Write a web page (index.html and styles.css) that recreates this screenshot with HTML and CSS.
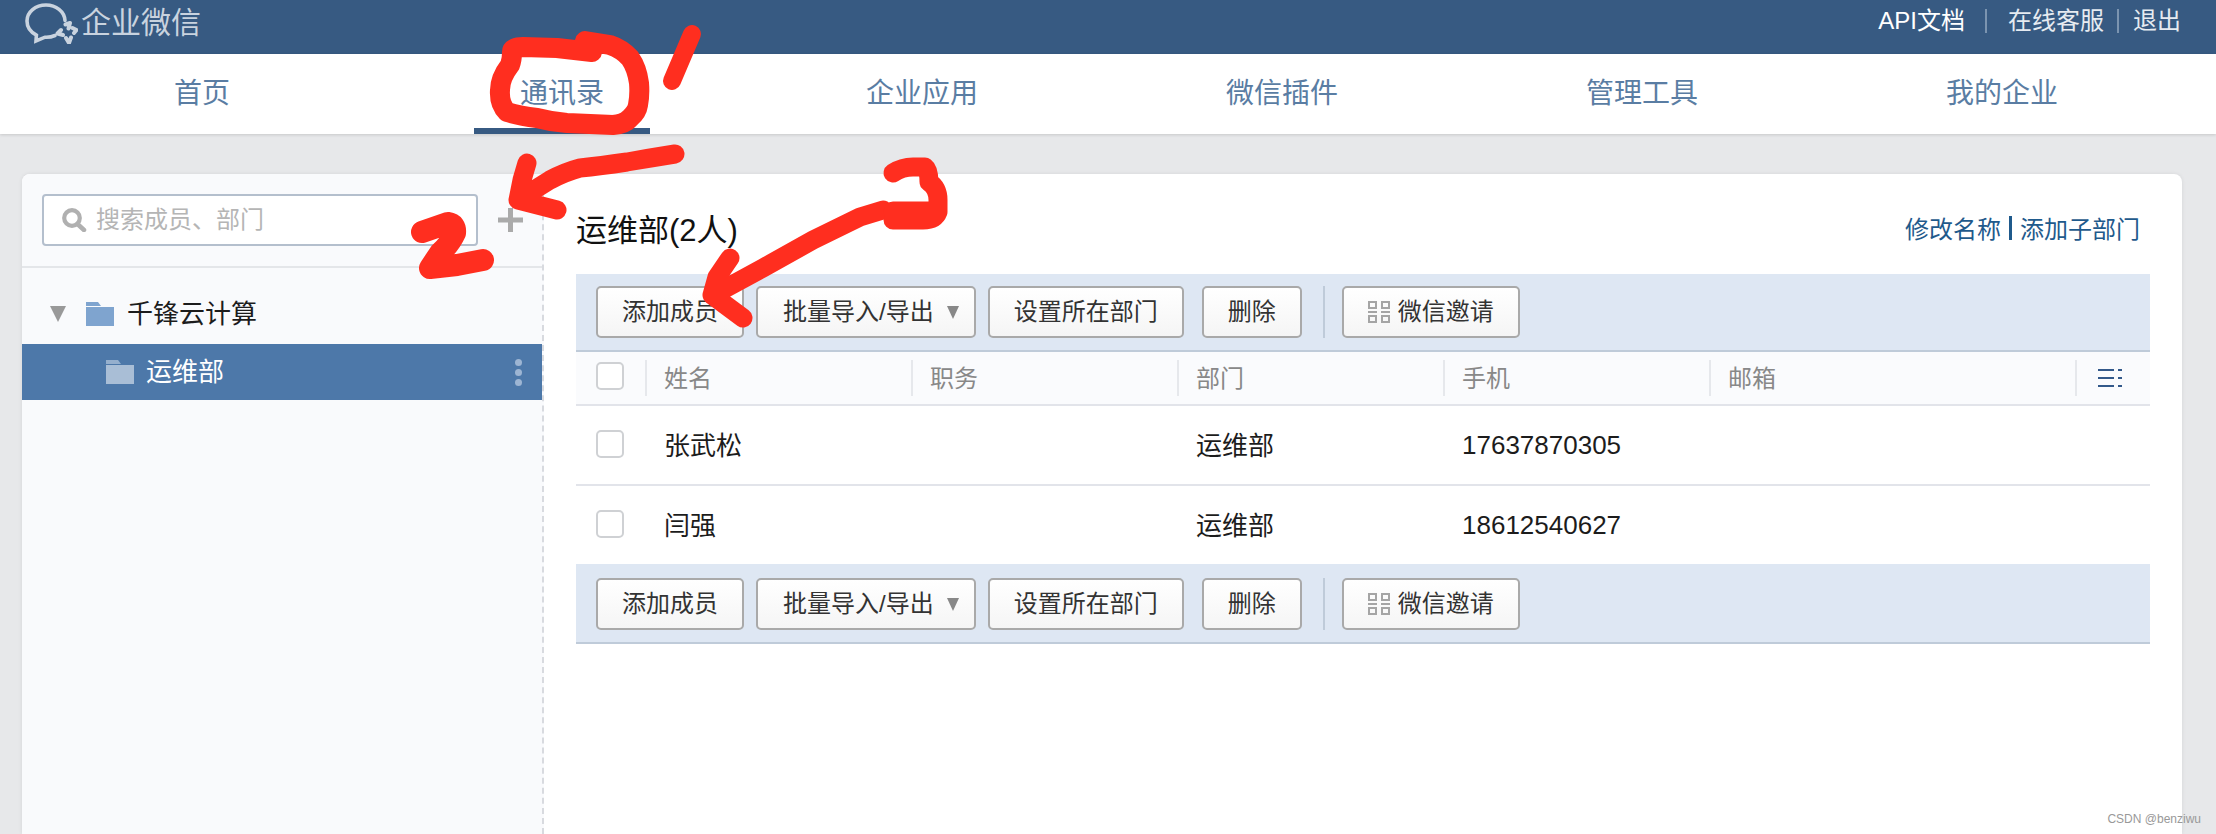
FILE: index.html
```html
<!DOCTYPE html>
<html lang="zh-CN">
<head>
<meta charset="utf-8">
<title>企业微信</title>
<link rel="stylesheet" href="styles.css">
</head>
<body>
<div class="page">
  <header class="topbar">
    <div class="brand">
      <svg class="brand-logo" viewBox="0 0 54 42" width="54" height="42" fill="none">
        <path d="M31 33.5C28 34.8 24.5 35.4 21 35.2L12 39L12.4 33.2C6.5 30 3 25 3 19C3 10 11.500 3 22 3C32 3 40.500 9.500 41 18.500" stroke="#c9d3df" stroke-width="3.600" stroke-linecap="round"/>
        <path d="M41.500 22.500L46 21L44.500 26.500M37 28L33.500 31.500L39 33M42 36L45 41L47 35.500M50 31L52.500 28L48.500 26" stroke="#c9d3df" stroke-width="4" stroke-linejoin="round" stroke-linecap="round"/>
      </svg>
      <span class="brand-name">企业微信</span>
    </div>
    <nav class="toplinks">
      <a class="toplink toplink-api">API文档</a>
      <i class="topsep topsep-wide"></i>
      <a class="toplink">在线客服</a>
      <i class="topsep"></i>
      <a class="toplink">退出</a>
    </nav>
  </header>

  <nav class="mainnav">
    <a class="navitem">首页</a>
    <a class="navitem navitem-active">通讯录</a>
    <a class="navitem">企业应用</a>
    <a class="navitem">微信插件</a>
    <a class="navitem">管理工具</a>
    <a class="navitem">我的企业</a>
  </nav>

  <div class="content">
    <section class="card">
      <aside class="sidebar">
        <div class="side-head">
          <div class="search">
            <svg class="search-icon" viewBox="0 0 26 24" width="26" height="24" fill="none">
              <circle cx="11" cy="10" r="7.800" stroke="#b0b0b0" stroke-width="4.200"/>
              <path d="M16.500 16L23 22" stroke="#b0b0b0" stroke-width="4.500" stroke-linecap="round"/>
            </svg>
            <span class="search-text">搜索成员、部门</span>
          </div>
          <svg class="plus" viewBox="0 0 25 24" width="25" height="24">
            <path d="M10 0h5v9.500h10v5H15V24h-5V14.500H0v-5h10z" fill="#aaaaaa"/>
          </svg>
        </div>
        <ul class="tree">
          <li class="tree-row tree-root">
            <i class="caret"></i>
            <svg class="folder" viewBox="0 0 28 24" width="28" height="24">
              <path d="M0 0h12l3 4H0z" fill="#7fa4cf"/>
              <path d="M0 5h28v19H0z" fill="#7fa4cf"/>
            </svg>
            <span class="tree-label">千锋云计算</span>
          </li>
          <li class="tree-row tree-selected">
            <svg class="folder" viewBox="0 0 28 24" width="28" height="24">
              <path d="M0 0h12l3 4H0z" fill="#95afcd"/>
              <path d="M0 5h28v19H0z" fill="#a9bed6"/>
            </svg>
            <span class="tree-label">运维部</span>
            <span class="dots"><i></i><i></i><i></i></span>
          </li>
        </ul>
      </aside>

      <main class="main">
        <div class="title-row">
          <h1 class="title">运维部(2人)</h1>
          <div class="title-links"><a>修改名称</a><i class="bar"></i><a>添加子部门</a></div>
        </div>

        <div class="toolbar">
          <button class="btn">添加成员</button>
          <button class="btn btn-menu">批量导入/导出<i class="btn-caret"></i></button>
          <button class="btn">设置所在部门</button>
          <button class="btn btn-far">删除</button>
          <i class="tool-sep"></i>
          <button class="btn btn-invite">
            <svg class="qr" viewBox="0 0 22 22" width="22" height="22" fill="none" stroke="#a5a5a5" stroke-width="2">
              <path d="M1 1h7v6H1zM14 1h7v6h-7zM1 15h7v6H1zM14 15h7v6h-7z"/>
              <path d="M0 11h9M13 11h9"/>
            </svg>微信邀请</button>
        </div>

        <div class="grid grid-head">
          <div class="cell-check"><i class="check"></i></div>
          <div class="hcell">姓名</div>
          <div class="hcell">职务</div>
          <div class="hcell">部门</div>
          <div class="hcell">手机</div>
          <div class="hcell">邮箱</div>
          <div class="hcell hcell-icon">
            <svg viewBox="0 0 24 18" width="24" height="18" fill="#33598a">
              <path d="M0 0h16v2H0zM20 0h4v2h-4zM0 8h16v2H0zM20 8h4v2h-4zM0 16h16v2H0zM20 16h4v2h-4z"/>
            </svg>
          </div>
        </div>
        <div class="grid grid-row">
          <div class="cell-check"><i class="check"></i></div>
          <div class="cell">张武松</div>
          <div class="cell"></div>
          <div class="cell">运维部</div>
          <div class="cell cell-num">17637870305</div>
          <div class="cell"></div>
          <div class="cell"></div>
        </div>
        <div class="grid grid-row grid-last">
          <div class="cell-check"><i class="check"></i></div>
          <div class="cell">闫强</div>
          <div class="cell"></div>
          <div class="cell">运维部</div>
          <div class="cell cell-num">18612540627</div>
          <div class="cell"></div>
          <div class="cell"></div>
        </div>

        <div class="toolbar toolbar-bottom">
          <button class="btn">添加成员</button>
          <button class="btn btn-menu">批量导入/导出<i class="btn-caret"></i></button>
          <button class="btn">设置所在部门</button>
          <button class="btn btn-far">删除</button>
          <i class="tool-sep"></i>
          <button class="btn btn-invite">
            <svg class="qr" viewBox="0 0 22 22" width="22" height="22" fill="none" stroke="#a5a5a5" stroke-width="2">
              <path d="M1 1h7v6H1zM14 1h7v6h-7zM1 15h7v6H1zM14 15h7v6h-7z"/>
              <path d="M0 11h9M13 11h9"/>
            </svg>微信邀请</button>
        </div>
      </main>
    </section>
  </div>

  <svg class="marks" viewBox="0 0 2216 834" width="2216" height="834" fill="none">
    <g stroke="#ff2e1f" stroke-linecap="round" stroke-linejoin="round">
      <path stroke-width="20" d="M592 52L557 48L523 47Q512 47 512 52Q512 60 510 65Q500 78 500 90Q499 104 507 112Q520 116 537 118Q552 122 567 123L613 125Q625 124 630 118Q637 112 638 105Q640 95 639 83Q637 68 630 58Q622 49 610 45L585 41"/>
      <path stroke-width="18" d="M692 34L672 81"/>
      <path stroke-width="19" d="M675 154Q650 158 627 162Q600 166 580 168Q565 172 550 180L518 200L557 210M527 163L522 180L518 200"/>
      <path stroke-width="22" d="M422 232L448 223Q456 224 455 233Q450 244 440 253L430 268L457 265L483 260"/>
      <path stroke-width="19" d="M883 210L860 217L813 240L763 268L717 293L712 295L743 318M730 258L717 277L712 295"/>
      <path stroke-width="19" d="M893 173Q902 167 913 167H925Q929 170 929 182Q938 188 938 200V212Q935 220 923 220H893M893 211H938"/>
    </g>
  </svg>
  <div class="watermark">CSDN @benziwu</div>
</div>
</body>
</html>
```
FILE: styles.css
```css
* { box-sizing: border-box; }
html, body { margin: 0; padding: 0; }
body {
  font-family: "Liberation Sans", "Noto Sans CJK SC", sans-serif;
  color: #1c1c1c;
  background: #e7e8ea;
}
i { display: block; font-style: normal; }
ul { list-style: none; margin: 0; padding: 0; }

.page {
  position: relative;
  width: 2216px;
  height: 834px;
  overflow: hidden;
  display: flex;
  flex-direction: column;
}

/* top bar */
.topbar {
  flex: none;
  height: 54px;
  background: #375a82;
  display: flex;
  justify-content: space-between;
  align-items: flex-start;
  padding: 0 35px 0 24px;
}
.brand { display: flex; align-items: center; height: 46px; }
.brand-logo { display: block; }
.brand-name {
  margin-left: 3px;
  font-size: 30px;
  line-height: 46px;
  color: #c9d3df;
}
.toplinks { display: flex; align-items: center; height: 42px; }
.toplink { font-size: 24px; line-height: 42px; color: #e6ebf1; }
.toplink-api { color: #fff; }
.topsep {
  width: 2px;
  height: 24px;
  margin: 0 14px 0 13px;
  background: #7b94b0;
}
.topsep-wide { margin: 0 21px 0 20px; }

/* main nav */
.mainnav {
  position: relative;
  flex: none;
  height: 80px;
  background: #fff;
  box-shadow: 0 1px 3px rgba(0, 0, 0, .14);
  display: grid;
  grid-template-columns: repeat(6, 360px);
  padding-left: 22px;
}
.navitem {
  position: relative;
  text-align: center;
  font-size: 28px;
  line-height: 80px;
  color: #5a7da3;
}
.navitem-active::after {
  content: "";
  position: absolute;
  left: 92px;
  bottom: 0;
  width: 176px;
  height: 6px;
  background: #375a82;
}

/* card */
.content { flex: 1; min-height: 0; padding: 40px 34px 0 22px; }
.card {
  height: 100%;
  display: flex;
  background: #fff;
  border-radius: 8px 8px 0 0;
  box-shadow: 0 0 4px rgba(0, 0, 0, .08);
  overflow: hidden;
}

/* sidebar */
.sidebar {
  flex: none;
  width: 522px;
  background: #f9fafc;
  border-right: 2px dashed #d8dadf;
}
.side-head {
  height: 94px;
  padding: 20px 0 0 20px;
  display: flex;
  align-items: flex-start;
  border-bottom: 2px solid #e4e6e9;
}
.search {
  width: 436px;
  height: 52px;
  display: flex;
  align-items: center;
  padding-left: 17px;
  background: #fff;
  border: 2px solid #b4bfcd;
  border-radius: 4px;
}
.search-icon { flex: none; display: block; }
.search-text { margin-left: 9px; font-size: 24px; color: #b5b5b5; line-height: 48px; }
.plus { flex: none; margin: 14px 0 0 20px; display: block; }

.tree { padding-top: 16px; }
.tree-row { display: flex; align-items: center; font-size: 26px; }
.tree-label { padding-bottom: 6px; }
.folder { flex: none; display: block; }
.tree-root { height: 60px; padding-left: 28px; color: #1c1c1c; }
.caret {
  width: 0;
  height: 0;
  border-left: 8px solid transparent;
  border-right: 8px solid transparent;
  border-top: 16px solid #999;
  margin-right: 20px;
}
.tree-root .tree-label { margin-left: 13px; }
.tree-selected {
  height: 56px;
  padding: 0 20px 0 84px;
  background: #4d78a9;
  color: #fff;
}
.tree-selected .tree-label { margin-left: 12px; }
.dots { margin-left: auto; display: flex; flex-direction: column; gap: 3px; }
.dots i { width: 7px; height: 7px; border-radius: 50%; background: #9db5d3; }

/* main */
.main { flex: 1; min-width: 0; padding: 0 32px; }
.title-row {
  height: 100px;
  padding-top: 7px;
  display: flex;
  justify-content: space-between;
  align-items: center;
}
.title { margin: 0; font-size: 31px; font-weight: 400; color: #111; }
.title-links {
  display: flex;
  align-items: center;
  padding-right: 10px;
  font-size: 24px;
  color: #1f5a8c;
}
.bar { width: 3px; height: 24px; margin: 0 8px; background: #1f5a8c; }

.toolbar {
  height: 78px;
  padding: 12px 20px 0;
  display: flex;
  align-items: flex-start;
  gap: 12px;
  background: #dee7f3;
  border-bottom: 2px solid #bfcbd9;
}
.toolbar-bottom { height: 80px; padding-top: 14px; }
.btn {
  height: 52px;
  padding: 0 24px 6px;
  display: flex;
  align-items: center;
  font: inherit;
  font-size: 24px;
  color: #333;
  background: linear-gradient(#fff, #f5f5f5);
  border: 2px solid #a9a9a9;
  border-radius: 5px;
}
.btn-menu { padding: 0 15px 6px 25px; }
.btn-caret {
  width: 0;
  height: 0;
  margin: 6px 0 0 13px;
  border-left: 6px solid transparent;
  border-right: 6px solid transparent;
  border-top: 13px solid #888;
}
.btn-far { margin-left: 6px; }
.tool-sep { width: 2px; height: 52px; margin: 0 5px 0 9px; background: #bfcbd9; }
.qr { flex: none; display: block; margin: 6px 8px 0 0; }

.grid {
  display: grid;
  grid-template-columns: 69px repeat(4, 266px) 366px 75px;
  align-items: center;
}
.grid-head {
  height: 54px;
  background: #fafbfd;
  border-bottom: 2px solid #e2e4ea;
}
.grid-row { height: 80px; border-bottom: 2px solid #e2e4ea; font-size: 26px; }
.grid-last { height: 78px; border-bottom: 0; }
.cell-check { padding: 0 0 2px 20px; }
.grid-head .cell-check { padding-bottom: 4px; }
.check {
  width: 28px;
  height: 28px;
  background: #fff;
  border: 2px solid #cfd1d4;
  border-radius: 5px;
}
.hcell {
  height: 36px;
  padding-left: 17px;
  border-left: 2px solid #e6e8ec;
  font-size: 24px;
  line-height: 38px;
  color: #888;
}
.hcell-icon { padding-left: 21px; display: flex; align-items: center; }
.hcell-icon svg { display: block; }
.cell { padding: 0 0 4px 19px; color: #1c1c1c; }
.cell-num { padding-bottom: 0; }

/* hand-drawn annotation layer */
.marks { position: absolute; left: 0; top: 0; pointer-events: none; }
.watermark {
  position: absolute;
  right: 15px;
  bottom: 8px;
  font-size: 12px;
  line-height: 14px;
  color: #999;
}
```
